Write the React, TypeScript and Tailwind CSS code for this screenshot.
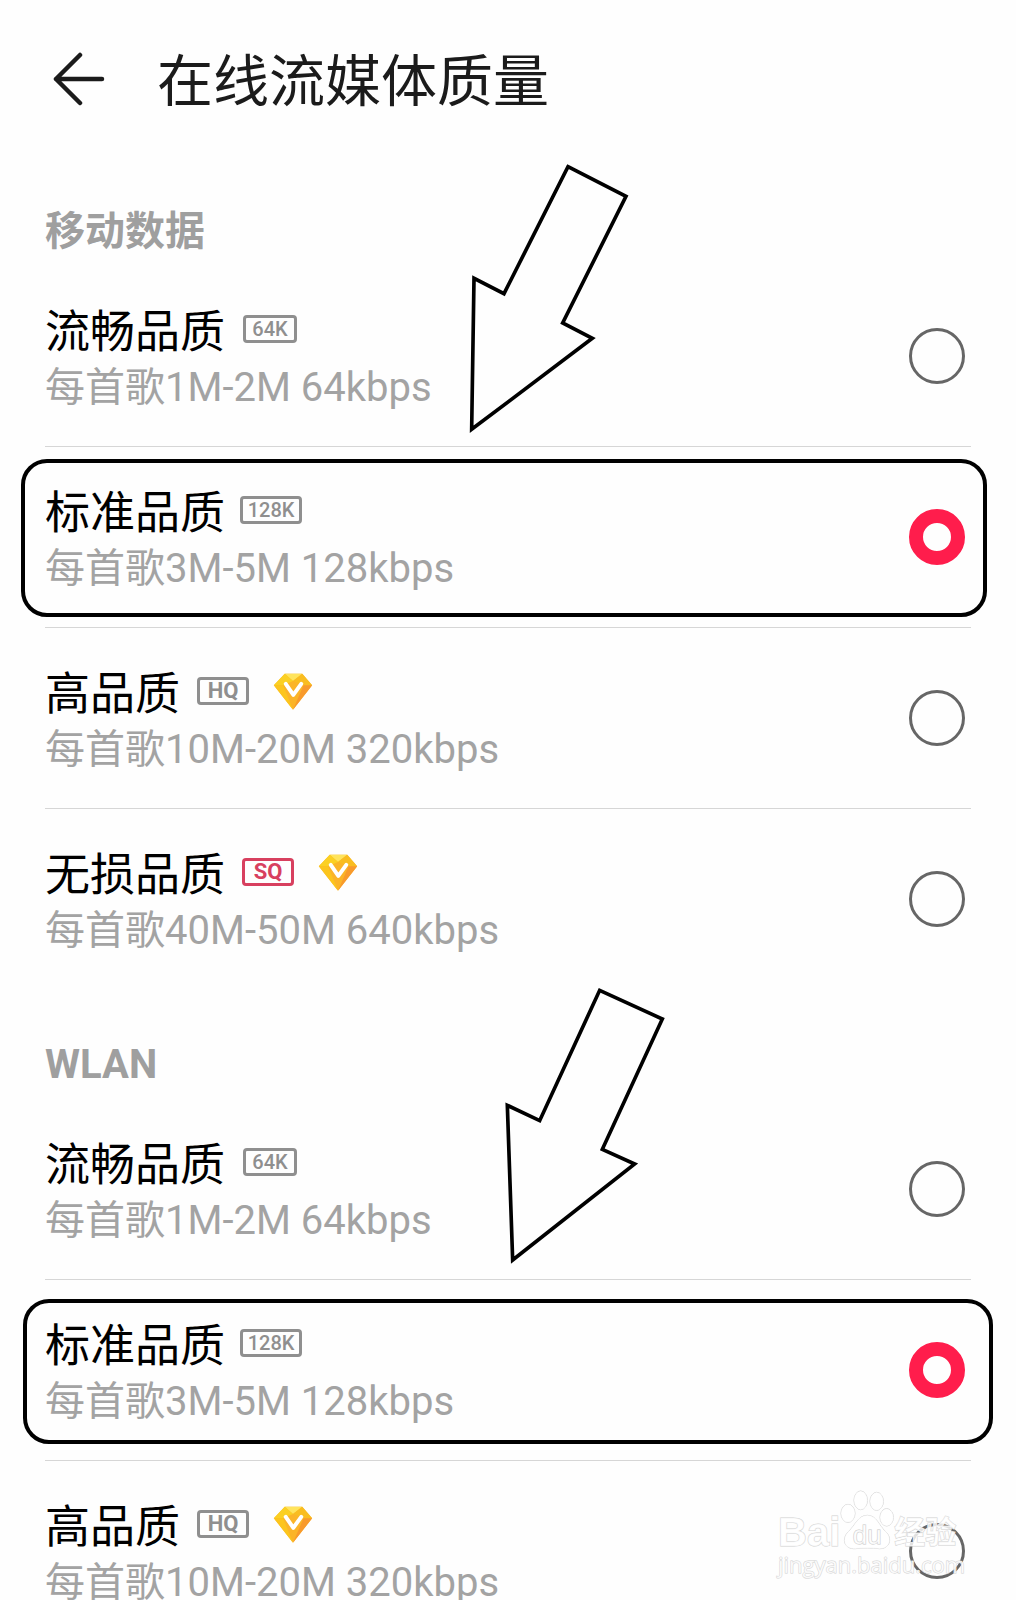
import { useState } from "react";

type Badge = "64K" | "128K" | "HQ" | "SQ";

interface Quality {
  id: string;
  name: string;
  detail: string;
  badge: Badge;
  vip?: boolean;
}

const qualities: Quality[] = [
  { id: "smooth", name: "流畅品质", detail: "每首歌1M-2M 64kbps", badge: "64K" },
  { id: "standard", name: "标准品质", detail: "每首歌3M-5M 128kbps", badge: "128K" },
  { id: "high", name: "高品质", detail: "每首歌10M-20M 320kbps", badge: "HQ", vip: true },
  { id: "lossless", name: "无损品质", detail: "每首歌40M-50M 640kbps", badge: "SQ", vip: true },
];

const badgeStyles: Record<Badge, string> = {
  "64K": "ml-[18px] w-[54px] border-[#8f8f8f] text-[#8f8f8f] text-[20px] font-medium",
  "128K": "ml-[15px] w-[62px] border-[#8f8f8f] text-[#8f8f8f] text-[20px] font-medium",
  HQ: "ml-[17px] w-[52px] border-[#8f8f8f] text-[#8f8f8f] text-[22px] font-bold",
  SQ: "ml-[17px] w-[52px] border-[#d8405f] text-[#d8405f] text-[22px] font-bold",
};

function BackIcon() {
  return (
    <svg viewBox="0 0 54 54" className="size-[54px]" fill="none" stroke="#1b1b1b" strokeWidth="4.5" strokeLinecap="round" strokeLinejoin="round" aria-hidden="true">
      <path d="M27 3 L3 27 L27 51 M3 27 H49" />
    </svg>
  );
}

function VipDiamond() {
  return (
    <svg viewBox="0 0 120 112" className="ml-6 h-[37px] w-10" aria-hidden="true">
      <path d="M35 2 H88 L118 37 L60 111 L2 37 Z" fill="#fbb428" />
      <path d="M35 2 H88 L60 24 Z" fill="#ffe45c" />
      <path d="M35 2 L60 24 L30 37 H2 Z" fill="#fbd023" />
      <path d="M88 2 L60 24 L92 37 H118 Z" fill="#f9bd20" />
      <path d="M2 37 H30 L60 111 Z" fill="#fcc51d" />
      <path d="M118 37 H92 L60 111 Z" fill="#f89a2c" />
      <path d="M38 33 L61 66 L85 33" fill="none" stroke="#fff" strokeWidth="12" strokeLinecap="round" strokeLinejoin="round" />
    </svg>
  );
}

function QualityRow({ quality, group, checked, onSelect, frame, last }: {
  quality: Quality;
  group: string;
  checked: boolean;
  onSelect: () => void;
  frame?: string;
  last: boolean;
}) {
  const inputId = `${group}-${quality.id}`;
  return (
    <li className={`relative flex h-[181px] items-center justify-between border-b pr-[6px] ${last ? "border-transparent" : "border-[#d6d6d6]"}`}>
      <label htmlFor={inputId} className="flex flex-1 cursor-pointer flex-col pt-[6px]">
        <span className="flex h-[58px] items-center">
          <span className="pt-2 text-[45px] leading-[58px] text-black">{quality.name}</span>
          <span className={`flex h-7 items-center justify-center rounded-[4px] border-[3px] leading-none ${badgeStyles[quality.badge]}`}>{quality.badge}</span>
          {quality.vip && <VipDiamond />}
        </span>
        <span className="text-[40px] leading-[60px] text-[#a3a3a3]">{quality.detail}</span>
      </label>
      <input
        id={inputId}
        type="radio"
        name={group}
        checked={checked}
        onChange={onSelect}
        className="size-14 shrink-0 cursor-pointer appearance-none rounded-full border-[3px] border-[#666] checked:border-[14px] checked:border-[#ff1d4c]"
      />
      {frame && <span className={`pointer-events-none absolute rounded-[26px] border-4 border-black ${frame}`} />}
    </li>
  );
}

function QualitySection({ title, group, frame, arrow, arrowClass }: {
  title: string;
  group: string;
  frame: string;
  arrow: string;
  arrowClass: string;
}) {
  const [selected, setSelected] = useState("standard");
  return (
    <section className="relative pt-[39px]">
      <h2 className="flex h-[70px] items-center pt-0.5 text-[40px] leading-none font-bold text-[#9f9f9f]">{title}</h2>
      <ul>
        {qualities.map((q, i) => (
          <QualityRow
            key={q.id}
            quality={q}
            group={group}
            checked={selected === q.id}
            onSelect={() => setSelected(q.id)}
            frame={q.id === "standard" ? frame : undefined}
            last={i === qualities.length - 1}
          />
        ))}
      </ul>
      <svg viewBox="0 0 660 930" className={`pointer-events-none absolute h-[310px] w-[220px] ${arrowClass}`} fill="#fefefe" stroke="#000" strokeWidth="11" aria-hidden="true">
        <path d={arrow} />
      </svg>
    </section>
  );
}

function Watermark() {
  return (
    <div className="pointer-events-none absolute right-[54px] bottom-[22px] flex w-[184px] flex-col text-white/80 [-webkit-text-stroke:1px_#d2d2d2] [paint-order:stroke_fill]">
      <div className="flex h-[60px] items-end">
        <span className="font-['Liberation_Sans'] text-[40px] leading-[36px] font-bold">Bai</span>
        <span className="relative flex h-[60px] w-[54px] items-end justify-center">
          <svg viewBox="0 0 162 180" className="absolute inset-0 size-full" fill="#ffffffcc" stroke="#d4d4d4" strokeWidth="3" aria-hidden="true">
            <ellipse cx="24" cy="70" rx="21" ry="27" />
            <ellipse cx="62" cy="31" rx="20" ry="28" />
            <ellipse cx="110" cy="34" rx="20" ry="27" />
            <ellipse cx="140" cy="82" rx="20" ry="26" />
            <path d="M82 76 C110 76 116 106 136 124 C160 146 148 177 118 176 C96 173 68 173 46 176 C14 178 2 148 26 124 C46 106 54 76 82 76 Z" />
          </svg>
          <span className="relative pb-0.5 font-['Liberation_Sans'] text-[26px] leading-[26px] [-webkit-text-stroke:1px_#c8c8c8]">du</span>
        </span>
        <span className="text-[31px] leading-[34px] font-bold">经验</span>
      </div>
      <span className="font-['Open_Sans'] text-[22px] leading-[28px]">jingyan.baidu.com</span>
    </div>
  );
}

export default function App() {
  return (
    <div className="relative h-screen overflow-hidden bg-[#fefefe] font-[Roboto,'Noto_Sans_CJK_SC',sans-serif]" lang="zh-CN">
      <header className="flex h-[157px] items-center gap-[50px] px-[53px]">
        <button type="button" aria-label="返回" className="cursor-pointer">
          <BackIcon />
        </button>
        <h1 className="pt-1.5 text-[56px] leading-[72px] text-[#1b1b1b]">在线流媒体质量</h1>
      </header>
      <main className="px-[45px]">
        <QualitySection
          title="移动数据"
          group="mobile"
          frame="top-3 bottom-[10px] -left-6 -right-4"
          arrow="M384 50 L558 139 L368 519 L457 565 L95 838 L102 385 L192 431 Z"
          arrowClass="-top-[7px] left-[395px]"
        />
        <QualitySection
          title="WLAN"
          group="wlan"
          frame="top-[19px] bottom-4 -left-[22px] -right-[22px]"
          arrow="M359 61 L547 147 L367 538 L464 582 L98 870 L82 406 L179 452 Z"
          arrowClass="-top-5 left-[435px]"
        />
      </main>
      <Watermark />
    </div>
  );
}
